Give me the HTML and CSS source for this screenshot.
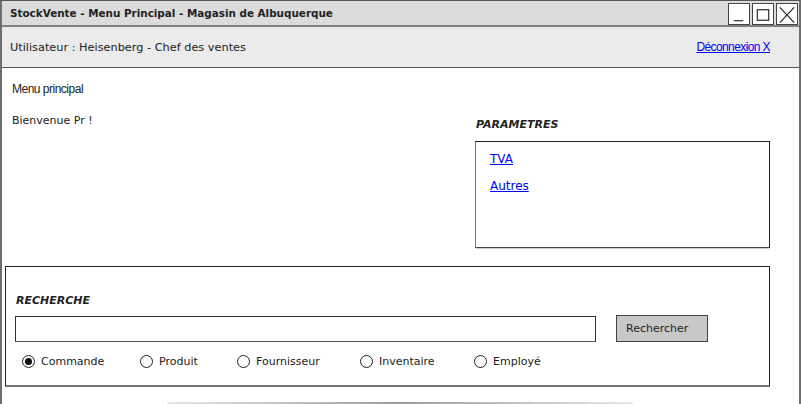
FILE: index.html
```html
<!DOCTYPE html>
<html lang="fr">
<head>
    <meta charset="UTF-8">
    <title>StockVente - Menu Principal</title>
    <link rel="stylesheet" href="styles.css">
</head>
<body>
    <div class="window">
        <div class="titlebar">
            <span class="title">StockVente - Menu Principal - Magasin de Albuquerque</span>
            <div class="win-buttons">
                <span class="win-btn">
                    <svg width="21" height="22" viewBox="0 0 21 22"><line x1="5" y1="17" x2="15" y2="17" stroke="#222" stroke-width="1.2"/></svg>
                </span>
                <span class="win-btn">
                    <svg width="21" height="22" viewBox="0 0 21 22"><rect x="4.5" y="5.5" width="12" height="11" fill="none" stroke="#222" stroke-width="1.2"/></svg>
                </span>
                <span class="win-btn">
                    <svg width="21" height="22" viewBox="0 0 21 22"><path d="M3 3 L18 19 M18 3 L3 19" stroke="#222" stroke-width="1.2"/></svg>
                </span>
            </div>
        </div>

        <div class="userbar">
            <span>Utilisateur : Heisenberg - Chef des ventes</span>
            <a href="#" class="logout">Déconnexion X</a>
        </div>

        <div class="main">
            <div class="top">
                <div class="left-col">
                    <p class="breadcrumb">Menu principal</p>
                    <p class="welcome">Bienvenue Pr !</p>
                </div>
                <div class="right-col">
                    <h2 class="section-title">PARAMETRES</h2>
                    <div class="param-box">
                        <a href="#">TVA</a>
                        <a href="#">Autres</a>
                    </div>
                </div>
            </div>

            <div class="search-box">
                <h2 class="section-title">RECHERCHE</h2>
                <div class="search-row">
                    <div class="search-input"></div>
                    <button class="search-btn">Rechercher</button>
                </div>
                <div class="radios">
                    <label class="radio checked"><span class="dot"></span>Commande</label>
                    <label class="radio"><span class="dot"></span>Produit</label>
                    <label class="radio"><span class="dot"></span>Fournisseur</label>
                    <label class="radio"><span class="dot"></span>Inventaire</label>
                    <label class="radio"><span class="dot"></span>Employé</label>
                </div>
            </div>

            <div class="bottom-bar"></div>
        </div>
    </div>
</body>
</html>
```

FILE: styles.css
```css
:root {
    --sketch: "DejaVu Sans", "Noto Sans", sans-serif;
    --plain: "Liberation Sans", Arial, sans-serif;
    --ink: #222;
}

body {
    margin: 0;
    width: 801px;
    height: 404px;
    overflow: hidden;
    background: white;
    font-family: var(--sketch);
    color: var(--ink);
}

.window {
    box-sizing: border-box;
    height: 404px;
    border-left: 2px solid #6e6e6e;
    border-right: 2px solid #6e6e6e;
    border-top: 1px solid #555;
}

.titlebar {
    height: 24px;
    background: #dcdcdc;
    border-bottom: 2px solid #808080;
    display: flex;
    align-items: center;
    justify-content: space-between;
    padding-left: 8px;
}

.title {
    font-weight: bold;
    font-size: 10.4px;
}

.win-buttons {
    display: flex;
    gap: 2px;
    padding-right: 1px;
    align-self: flex-start;
    margin-top: 2px;
}

.win-btn {
    box-sizing: border-box;
    width: 22px;
    height: 22px;
    border: 1px solid #444;
    background: white;
    display: flex;
}

.win-btn svg {
    display: block;
}

.userbar {
    height: 40px;
    background: #ebebeb;
    border-bottom: 1px solid #555;
    display: flex;
    align-items: center;
    justify-content: space-between;
    padding: 0 29px 0 8px;
    font-size: 11.3px;
}

.logout {
    font-family: var(--plain);
    font-size: 12px;
    letter-spacing: -0.6px;
    color: #0000ff;
}

.main {
    padding-left: 3px;
}

.top {
    display: flex;
    justify-content: space-between;
    padding: 0 29px 0 7px;
    height: 198px;
}

.breadcrumb {
    margin: 14px 0 0;
    font-family: var(--plain);
    font-size: 12px;
    line-height: 14px;
    letter-spacing: -0.5px;
}

.welcome {
    margin: 18px 0 0;
    font-size: 11px;
    line-height: 14px;
}

.right-col {
    width: 295px;
}

.section-title {
    margin: 0;
    font-size: 11px;
    font-weight: bold;
    font-style: italic;
    line-height: 14px;
}

.right-col .section-title {
    margin: 50px 0 9px 1px;
}

.param-box {
    box-sizing: border-box;
    height: 107px;
    border: 1px solid #222;
    border-left-color: #777;
    border-bottom-color: #444;
    box-shadow: 0 2px 0 -1px #ccc;
    display: flex;
    flex-direction: column;
    align-items: flex-start;
    gap: 13px;
    padding: 10px 0 0 14px;
}

.param-box a {
    color: #0000ff;
    font-size: 12px;
    line-height: 14px;
}

.search-box {
    box-sizing: border-box;
    width: 765px;
    height: 121px;
    border: 1px solid #222;
    border-bottom: 2px solid #777;
    padding: 27px 0 0 9px;
}

.search-box .section-title {
    margin-left: 1px;
}

.search-row {
    display: flex;
    align-items: center;
    gap: 20px;
    margin-top: 7px;
}

.search-input {
    box-sizing: border-box;
    width: 581px;
    height: 26px;
    border: 1px solid #333;
    border-bottom-color: #555;
}

.search-btn {
    box-sizing: border-box;
    width: 92px;
    height: 27px;
    background: #c8c8c8;
    border: 1px solid #444;
    font-family: var(--sketch);
    font-size: 11px;
    color: var(--ink);
    text-align: left;
    padding: 0 0 0 9px;
}

.radios {
    display: flex;
    margin: 13px 0 0 7px;
}

.radio {
    display: flex;
    align-items: center;
    gap: 6px;
    font-size: 11px;
}

.radio:nth-child(1) { width: 118px; }
.radio:nth-child(2) { width: 97px; }
.radio:nth-child(3) { width: 123px; }
.radio:nth-child(4) { width: 114px; }

.dot {
    box-sizing: border-box;
    width: 13px;
    height: 13px;
    border: 1px solid #222;
    border-radius: 50%;
    display: flex;
    align-items: center;
    justify-content: center;
}

.radio.checked .dot::after {
    content: "";
    width: 7px;
    height: 7px;
    border-radius: 50%;
    background: #111;
}

.bottom-bar {
    width: 466px;
    height: 3px;
    margin: 15px 0 0 162px;
    background: linear-gradient(90deg, #e8e8e8, #bbb 30%, #999 50%, #bbb 70%, #e8e8e8);
}
```
